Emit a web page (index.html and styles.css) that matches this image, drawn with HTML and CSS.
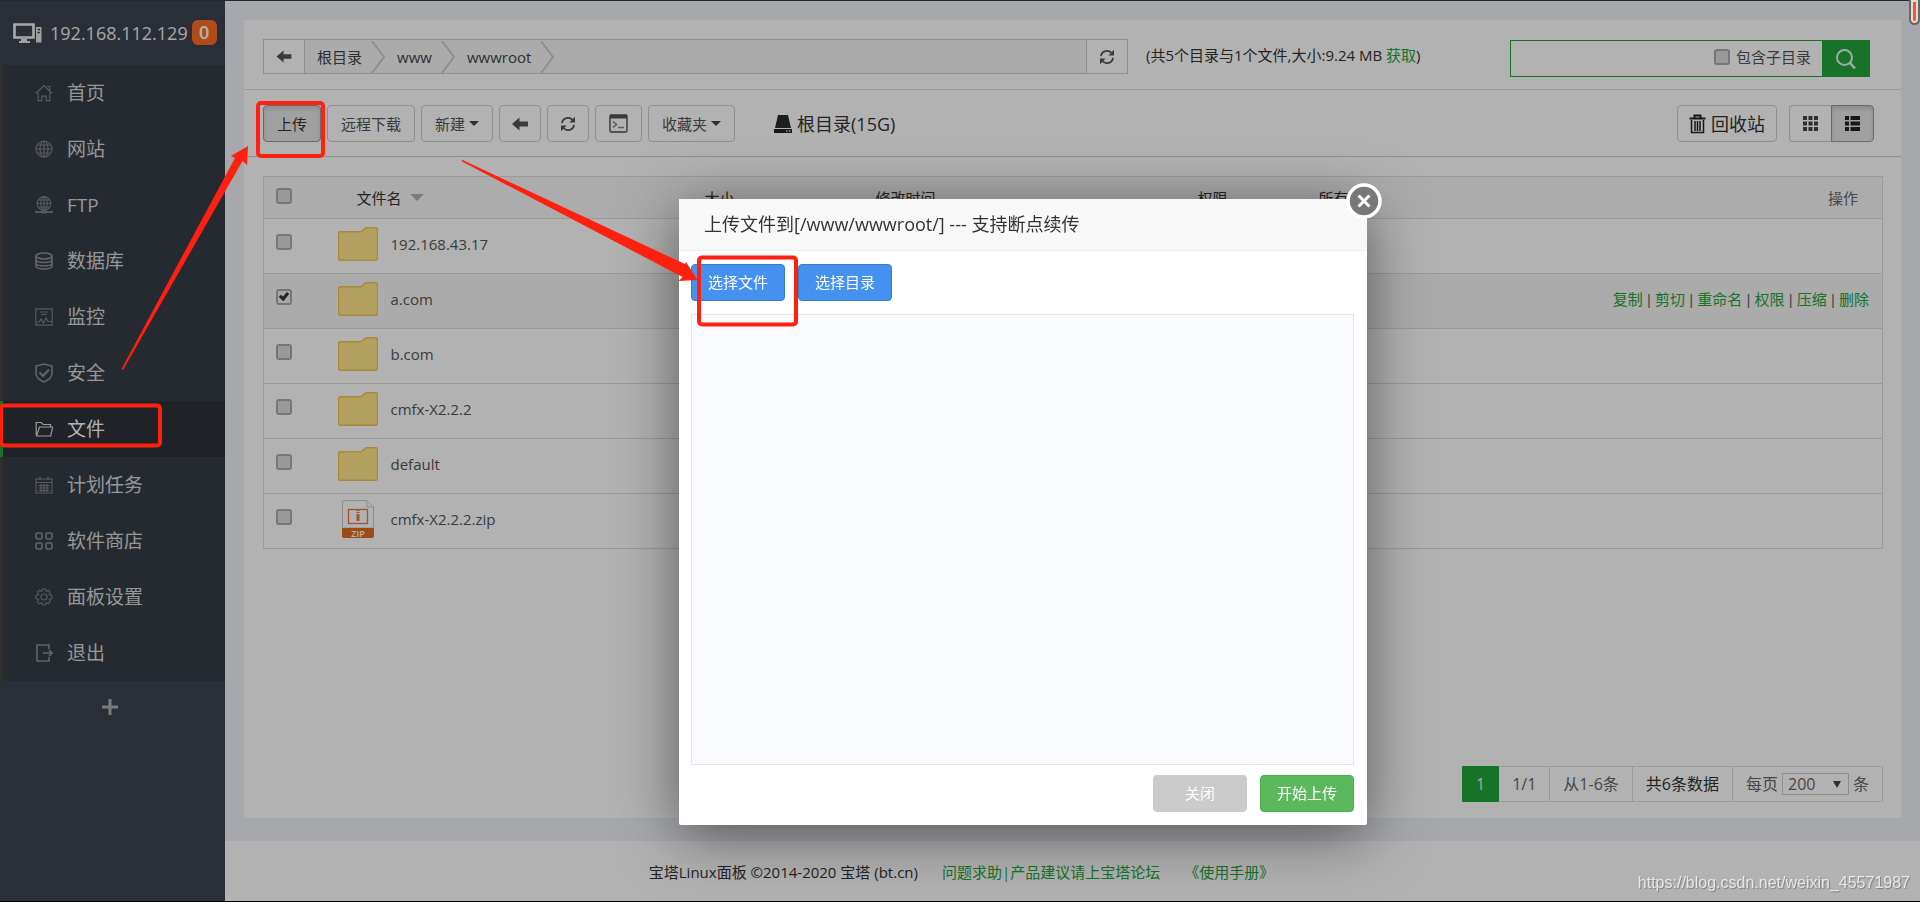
FILE: index.html
```html
<!DOCTYPE html>
<html lang="zh-CN">
<head>
<meta charset="utf-8">
<title>宝塔Linux面板</title>
<link rel="stylesheet" href="styles.css">
</head>
<body>
<svg class="defs" aria-hidden="true">
  <symbol id="i-refresh" viewBox="0 0 16 16"><path d="M2 7.2A6.1 6.1 0 0 1 12.6 4M14 8.8A6.1 6.1 0 0 1 3.4 12" fill="none" stroke="currentColor" stroke-width="1.800"/><path d="M15 .8v5.700H9.400zM1 15.200V9.500h5.600z" fill="currentColor"/></symbol>
  <symbol id="i-left" viewBox="0 0 16 14"><path d="M0 7l7.500-6.500v4H16v5H7.500v4z" fill="currentColor"/></symbol>
  <symbol id="i-folder" viewBox="0 0 40 34"><path d="M2.500 4.700h20.500l5-4h9.500a2 2 0 0 1 2 2v28.600a2 2 0 0 1-2 2h-35a2 2 0 0 1-2-2V6.700a2 2 0 0 1 2-2z" fill="#ffe68a" stroke="#f2c352" stroke-width="1.400"/></symbol>
  <symbol id="i-chev" viewBox="0 0 14 32"><path d="M1 0l12 16L1 32" fill="none" stroke="#ccccd2" stroke-width="1.800"/></symbol>
</svg>
<div class="app">
  <aside class="sidebar">
    <h1 class="host">
      <svg width="29" height="20" viewBox="0 0 29 20"><path d="M1.500 1.500h19v13h-19z" fill="none" stroke="#f4f4f4" stroke-width="2.600"/><path d="M8 16h6v2h3v2H6v-2h2zM23 4h5.500v15.500H23z" fill="#e4e4e4"/><path d="M24.500 6.500h2.500M24.500 9.500h2.500" stroke="#3d434f" stroke-width="1.300"/></svg>
      <span class="ip">192.168.112.129</span><span class="count">0</span>
    </h1>
    <nav class="menu">
      <a href="#"><svg viewBox="0 0 18 18"><path d="M.8 9.500L9 1.500l8.200 8M3.200 8.500v8.200h3.600v-4.500h4.400v4.500h3.600V8.500M12 2.500h2.800v4"/></svg>首页</a>
      <a href="#"><svg viewBox="0 0 18 18"><circle cx="9" cy="9" r="8"/><ellipse cx="9" cy="9" rx="4" ry="8"/><path d="M9 1v16M1 9h16M2.300 5h13.400M2.300 13h13.400"/></svg>网站</a>
      <a href="#"><svg viewBox="0 0 18 18"><circle cx="9" cy="7.500" r="6.800"/><ellipse cx="9" cy="7.500" rx="3.200" ry="6.800"/><path d="M9 .7v15M2.200 7.500h13.600M3.200 4h11.600M3.200 11h11.600"/><path d="M0 16h18M6.500 16.500h5" stroke-width="2"/></svg>FTP</a>
      <a href="#"><svg viewBox="0 0 18 18" class="bright"><ellipse cx="9" cy="4" rx="8" ry="3"/><path d="M1 4v10c0 4 16 4 16 0V4M1 7.500c0 4 16 4 16 0M1 11c0 4 16 4 16 0"/></svg>数据库</a>
      <a href="#"><svg viewBox="0 0 18 18"><path d="M.8.8h16.400v16.400H.800zM5 4h8M6 6.500h6M.8 14H4l2-3 2.500 4 2.500-5 2 3.500h4"/></svg>监控</a>
      <a href="#"><svg viewBox="0 0 18 20" class="bright"><path d="M9 1L17 3v7.500c0 4-3.500 6.500-8 8.500-4.500-2-8-4.500-8-8.500V3z"/><path d="M4.500 9.500L8 13l6-6.500" stroke-width="2"/></svg>安全</a>
      <a href="#" class="active"><svg viewBox="0 0 18 18"><path d="M1.200 15V2.500h5l2 2h7.300V7M1.500 16L4.500 7h13.200l-2 9z"/></svg>文件</a>
      <a href="#"><svg viewBox="0 0 18 18"><path d="M1 3h16v14H1zM1 6.500h16M5 .5v3.500M13 .5v3.500M3.500 9.500h11M3.500 12h11M3.500 14.500h11M6 8v8M9 8v8M12 8v8"/></svg>计划任务</a>
      <a href="#"><svg viewBox="0 0 18 18" class="bright"><rect x="1" y="1" width="6" height="6" rx="1.500"/><rect x="11" y="1" width="6" height="6" rx="1.500"/><rect x="1" y="11" width="6" height="6" rx="1.500"/><rect x="11" y="11" width="6" height="6" rx="1.500"/></svg>软件商店</a>
      <a href="#"><svg viewBox="0 0 18 18"><circle cx="9" cy="9" r="3"/><path d="M7.500 1h3l.6 2.200 2.100-1 2 2-1 2.100 2.800 1.200v3l-2.800.8 1 2.500-2 2-2.100-1.200-.6 2.400h-3l-.8-2.400-2.300 1.200-2-2 1.200-2.400L1 10.500v-3l2.600-1-1.200-2.300 2-2 2.300 1.200z"/></svg>面板设置</a>
      <a href="#"><svg viewBox="0 0 18 18" class="bright"><path d="M14 5V1H2v16h12v-4M8 9h9M14 6l3 3-3 3"/></svg>退出</a>
    </nav>
    <button class="add" aria-label="添加"><svg width="18" height="18" viewBox="0 0 18 18"><path d="M9 1v16M1 9h16" stroke="#b0b0b0" stroke-width="3"/></svg></button>
  </aside>

  <div class="page">
    <main class="panel">
      <section class="pathbar">
        <div class="crumbs">
          <button class="sq" aria-label="后退"><svg width="16" height="13"><use href="#i-left"/></svg></button>
          <nav class="trail">
            <a href="#">根目录</a><svg width="14" height="32"><use href="#i-chev"/></svg>
            <a href="#">www</a><svg width="14" height="32"><use href="#i-chev"/></svg>
            <a href="#">wwwroot</a><svg width="14" height="32"><use href="#i-chev"/></svg>
          </nav>
          <button class="sq last" aria-label="刷新"><svg width="16" height="16"><use href="#i-refresh"/></svg></button>
        </div>
        <p class="summary">(共5个目录与1个文件,大小:9.24 MB <a href="#">获取</a>)</p>
        <form class="search">
          <input type="text" class="query" aria-label="搜索">
          <label><input type="checkbox" class="tick">包含子目录</label>
          <button type="button" aria-label="搜索"><svg width="22" height="22" viewBox="0 0 22 22"><circle cx="9.500" cy="9.500" r="7.500" fill="none" stroke="#e8f5ea" stroke-width="2"/><path d="M15 15l5 5.500" stroke="#e8f5ea" stroke-width="2.500"/></svg></button>
        </form>
      </section>

      <section class="toolbar">
        <button class="btn pressed">上传</button>
        <button class="btn">远程下载</button>
        <button class="btn">新建<i class="caret"></i></button>
        <button class="btn icon" aria-label="后退"><svg width="16" height="14"><use href="#i-left"/></svg></button>
        <button class="btn icon" aria-label="刷新"><svg width="16" height="16"><use href="#i-refresh"/></svg></button>
        <button class="btn" aria-label="终端"><svg width="19" height="19" viewBox="0 0 19 19"><rect x="1" y="1" width="17" height="17" rx="1.500" fill="none" stroke="#777" stroke-width="1.800"/><path d="M1 1h17v3.500H1z" fill="#555"/><path d="M4 7.500l3.500 3L4 13.500M9 13.500h6" fill="none" stroke="#888" stroke-width="1.600"/></svg></button>
        <button class="btn">收藏夹<i class="caret"></i></button>
        <span class="disk"><svg width="18" height="18" viewBox="0 0 18 18"><path d="M4 0h10l3 13H1z" fill="#2c2c2c"/><path d="M0 14h18v4H0z" fill="#222"/><path d="M12 16h1.500M15 16h1.500" stroke="#ddd" stroke-width="1.500"/></svg>根目录(15G)</span>
        <button class="btn trash"><svg width="17" height="20" viewBox="0 0 17 20"><path d="M.5 4.500h16M5.500 4V1.500h6V4" fill="none" stroke="#222" stroke-width="2"/><path d="M2.500 6v12.500h12V6M6 7v10M8.500 7v10M11 7v10" fill="none" stroke="#222" stroke-width="1.500"/></svg>回收站</button>
        <div class="views">
          <button class="btn" aria-label="图标"><svg width="15" height="15" viewBox="0 0 15 15"><path d="M0 0h4v4H0zM5.500 0h4v4h-4zM11 0h4v4h-4zM0 5.500h4v4H0zM5.500 5.500h4v4h-4zM11 5.500h4v4h-4zM0 11h4v4H0zM5.500 11h4v4h-4zM11 11h4v4h-4z" fill="#444"/></svg></button>
          <button class="btn pressed" aria-label="列表"><svg width="15" height="15" viewBox="0 0 15 15"><path d="M0 0h4v4H0zM5.500 0H15v4H5.500zM0 5.500h4v4H0zM5.500 5.500H15v4H5.500zM0 11h4v4H0zM5.500 11H15v4H5.500z" fill="#222"/></svg></button>
        </div>
      </section>

      <table class="files">
        <colgroup><col class="c-tick"><col class="c-name"><col class="c-size"><col class="c-time"><col class="c-perm"><col class="c-own"><col></colgroup>
        <thead><tr><th><input type="checkbox" class="tick" aria-label="全选"></th><th class="h-name">文件名<i class="sort"></i></th><th>大小</th><th>修改时间</th><th>权限</th><th>所有者</th><th class="h-op">操作</th></tr></thead>
        <tbody>
          <tr><td><input type="checkbox" class="tick" aria-label="192.168.43.17"></td><td><a href="#" class="file"><svg width="40" height="34"><use href="#i-folder"/></svg>192.168.43.17</a></td><td></td><td></td><td></td><td></td><td></td></tr>
          <tr class="sel"><td><input type="checkbox" class="tick" aria-label="a.com" checked></td><td><a href="#" class="file"><svg width="40" height="34"><use href="#i-folder"/></svg>a.com</a></td><td></td><td></td><td></td><td></td><td class="ops"><a href="#">复制</a> | <a href="#">剪切</a> | <a href="#">重命名</a> | <a href="#">权限</a> | <a href="#">压缩</a> | <a href="#">删除</a></td></tr>
          <tr><td><input type="checkbox" class="tick" aria-label="b.com"></td><td><a href="#" class="file"><svg width="40" height="34"><use href="#i-folder"/></svg>b.com</a></td><td></td><td></td><td></td><td></td><td></td></tr>
          <tr><td><input type="checkbox" class="tick" aria-label="cmfx-X2.2.2"></td><td><a href="#" class="file"><svg width="40" height="34"><use href="#i-folder"/></svg>cmfx-X2.2.2</a></td><td></td><td></td><td></td><td></td><td></td></tr>
          <tr><td><input type="checkbox" class="tick" aria-label="default"></td><td><a href="#" class="file"><svg width="40" height="34"><use href="#i-folder"/></svg>default</a></td><td></td><td></td><td></td><td></td><td></td></tr>
          <tr><td><input type="checkbox" class="tick" aria-label="cmfx-X2.2.2.zip"></td><td><a href="#" class="file"><svg width="40" height="38" viewBox="0 0 40 38"><path d="M4.500 28V2a1.500 1.500 0 0 1 1.500-1.500h23l6.500 6.500v21z" fill="#fff" stroke="#ccc"/><path d="M29 .5V7h6.500" fill="none" stroke="#ccc"/><rect x="10.500" y="9.500" width="19" height="14" fill="none" stroke="#e5783c" stroke-width="1.300"/><path d="M20 10v5" stroke="#e5783c" stroke-width="3" stroke-dasharray="1 1"/><path d="M18.500 15h3v6h-3z" fill="#e5783c"/><path d="M4 28h32v8a2 2 0 0 1-2 2H6a2 2 0 0 1-2-2z" fill="#e06a20"/><text x="20" y="36.500" class="zip" text-anchor="middle">ZIP</text></svg>cmfx-X2.2.2.zip</a></td><td></td><td></td><td></td><td></td><td></td></tr>
        </tbody>
      </table>

      <div class="pager">
        <span class="cur">1</span><span>1/1</span><span>从1-6条</span><span class="total">共6条数据</span>
        <label>每页<b class="pick"><select><option>200</option></select></b>条</label>
      </div>
    </main>
    <footer class="foot"><span>宝塔Linux面板 ©2014-2020 宝塔 (bt.cn)</span><a href="#">问题求助|产品建议请上宝塔论坛</a><a href="#">《使用手册》</a></footer>
  </div>
</div>

<div class="shade"></div>

<section class="dialog" role="dialog" aria-label="上传文件">
  <h2>上传文件到[/www/wwwroot/] --- 支持断点续传</h2>
  <button class="close" aria-label="关闭窗口"><svg width="36" height="36" viewBox="0 0 36 36"><circle cx="18" cy="18" r="16" fill="#787878" stroke="#fff" stroke-width="3.500"/><path d="M12.500 12.500l11 11M23.500 12.500l-11 11" stroke="#fff" stroke-width="3"/></svg></button>
  <div class="body">
    <div class="picks"><button class="act blue">选择文件</button><button class="act blue">选择目录</button></div>
    <div class="drop"></div>
    <div class="ends"><button class="act grey">关闭</button><button class="act green">开始上传</button></div>
  </div>
</section>

<svg class="marks" width="1920" height="902" viewBox="0 0 1920 902" aria-hidden="true">
  <g fill="none" stroke="#ff2010" stroke-width="4">
    <rect x="258" y="103" width="65" height="53" rx="3"/>
    <rect x="1" y="405.500" width="159" height="40" rx="3"/>
    <rect x="699" y="257.500" width="97" height="67" rx="3"/>
  </g>
  <g fill="#ff2010">
    <path d="M121.500 369L235 158l-4-2 17-10-1 19-4.500-4L123 370z"/>
    <path d="M461.500 159.500L687 265l-2-1 1-2 11.500 18-19 1 4-4L462 161.500z"/>
  </g>
</svg>
<i class="scroll"></i>
<div class="watermark">https://blog.csdn.net/weixin_45571987</div>
</body>
</html>
```
FILE: styles.css
```css
* { box-sizing: border-box; }
body { margin: 0; font: 15px/20px "Open Sans", "Noto Sans CJK SC", sans-serif; color: #333; background: #f0f1f6; border-top: 1px solid #3a3842; border-bottom: 1px solid #000; }
a { color: #20a53a; text-decoration: none; }
button, input, select { font: inherit; color: inherit; }
button { cursor: pointer; }
.defs { display: none; }

.app { display: flex; min-height: calc(100vh - 2px); }
.sidebar { flex: 0 0 225px; background: #3d434f; }
.host { display: flex; align-items: center; height: 64px; margin: 0; padding: 0 0 1px 13px; font-size: 18px; font-weight: 400; color: #fff; }
.ip { margin-left: 8px; color: #eee; }
.count { margin-left: 4px; width: 25px; border-radius: 6px; background: #fc6d26; font-weight: 600; line-height: 25px; text-align: center; }
.menu { background: #363d47; }
.menu a { display: flex; align-items: center; gap: 14px; height: 56px; padding-left: 32px; border-left: 3px solid #42433f; font-size: 19px; color: #d8d8d8; }
.menu svg { width: 18px; height: 20px; fill: none; stroke: #7c8086; stroke-width: 1.2; }
.menu svg.bright { stroke: #8d9094; stroke-width: 1.6; }
.menu a.active { background: #2d3238; border-left-color: #20a53a; color: #fff; }
.menu a.active svg { stroke: #ddd; }
.add { display: flex; margin: 17px 0 0 101px; padding: 0; border: 0; background: none; }

.page { flex: 1; min-width: 0; display: flex; flex-direction: column; }
.panel { flex: 1; display: flex; flex-direction: column; margin: 19px 19px 23px; background: #fff; }
.pathbar { display: flex; align-items: flex-start; padding: 19px 31px 12px 19px; border-bottom: 1px solid #ddd; }
.crumbs { flex: 0 1 865px; display: flex; height: 35px; border: 1px solid #ccc; }
.sq { display: flex; align-items: center; justify-content: center; width: 41px; padding: 0; border: 0; border-right: 1px solid #ccc; background: #fff; color: #555; }
.sq.last { border-right: 0; border-left: 1px solid #ccc; }
.trail { flex: 1; display: flex; align-items: center; background: #f5f5f5; }
.trail a { padding: 0 9px 0 12px; color: #444; }
.summary { margin: 6px 0 0 18px; }
.search { display: flex; align-items: stretch; width: 360px; height: 37px; margin: 1px 0 0 auto; border: 1px solid #20a53a; }
.query { flex: 1; min-width: 0; border: 0; background: none; outline: 0; }
.search label { display: flex; align-items: center; gap: 6px; padding: 0 11px 3px 0; color: #555; }
.search button { display: flex; align-items: center; justify-content: center; width: 47px; border: 0; background: #20a53a; }
.tick { appearance: none; display: block; width: 16px; height: 16px; margin: 0; border: 2px solid #aaa; border-radius: 3px; background: #dcdcdc; }
.tick:checked { background: #eee; }
.tick:checked::after { content: ""; display: block; width: 3px; height: 6px; margin-left: 3px; border: solid #333; border-width: 0 3px 3px 0; transform: rotate(40deg); }

.toolbar { display: flex; align-items: center; gap: 6px; padding: 15px 27px 14px 19px; border-bottom: 1px solid #ccc; }
.btn { display: flex; align-items: center; justify-content: center; height: 37px; padding: 0 13px; border: 1px solid #ccc; border-radius: 4px; background: #fff; color: #555; }
.btn svg { flex: none; }
.icon { padding: 0 12px; }
.pressed { background: #e6e6e6; border-color: #999; color: #333; box-shadow: inset 0 3px 5px rgba(0,0,0,.13); }
.caret { margin-left: 4px; border: 5px solid transparent; border-top-color: #444; border-bottom: 0; }
.disk { display: flex; align-items: center; gap: 5px; margin-left: 33px; font-size: 18px; }
.trash { margin-left: auto; gap: 5px; font-size: 18px; color: #333; padding: 0 11px; }
.views { display: flex; margin-left: 6px; }
.views .btn:first-child { border-right: 0; border-radius: 4px 0 0 4px; }
.views .btn:last-child { border-radius: 0 4px 4px 0; }

.files { width: calc(100% - 37px); margin: 19px 18px 0 19px; table-layout: fixed; border-collapse: collapse; border: 1px solid #ddd; }
.c-tick { width: 62px; }
.c-name { width: 367px; }
.c-size { width: 171px; }
.c-time { width: 322px; }
.c-perm { width: 121px; }
.c-own { width: 120px; }
.files th { height: 42px; padding: 0 12px; background: #f6f6f6; font-weight: 400; text-align: left; }
.files .h-name { padding-left: 31px; }
.files .h-op { padding-right: 24px; text-align: right; color: #666; }
.sort { display: inline-block; margin-left: 8px; border: 7px solid transparent; border-top-color: #b0b0b0; border-bottom: 0; vertical-align: 3px; }
.files td { height: 55px; padding: 0 12px 4px; border-top: 1px solid #ddd; }
.files .tick { position: relative; top: -2px; }
.file { display: flex; align-items: center; gap: 13px; color: #555; }
.sel td { background: #f5f5f5; }
.files .ops { padding: 0 13px 2px 0; font-family: "Liberation Sans", "Noto Sans CJK SC", sans-serif; text-align: right; white-space: nowrap; color: #666; }
.zip { font: 600 9px "Open Sans", sans-serif; fill: #fff; }

.pager { display: flex; margin: auto 18px 16px auto; border: 1px solid #ddd; font-size: 16px; line-height: 34px; color: #666; }
.pager span { padding: 0 13px; border-right: 1px solid #ddd; }
.pager .cur { margin: -1px 0 -1px -1px; padding: 1px 14px; border-right: 0; background: #20a53a; color: #eee; }
.pager .total { color: #333; }
.pager label { display: flex; align-items: center; gap: 4px; padding: 0 13px; }
.pick { position: relative; display: flex; font-weight: 400; }
.pick::after { content: ""; position: absolute; right: 8px; top: 8px; border: 4px solid transparent; border-top: 7px solid #444; border-bottom: 0; pointer-events: none; }
.pager select { appearance: none; width: 67px; height: 22px; padding: 0 5px; border: 1px solid #ccc; border-radius: 0; background: #fff; line-height: 20px; }

.foot { display: flex; align-items: center; justify-content: center; gap: 24px; height: 60px; padding: 2px 222px 0 0; background: #fff; }

.shade { position: fixed; inset: 0 0 1px; background: rgba(0,0,0,.3); }
.dialog { position: absolute; left: 679px; top: 199px; width: 688px; border-radius: 2px; background: #fff; box-shadow: 0 10px 60px rgba(0,0,0,.5); }
.dialog h2 { margin: 0; padding: 0 25px; border-bottom: 1px solid #eee; background: #f8f8f8; font-size: 18px; font-weight: 400; line-height: 51px; }
.close { position: absolute; top: -16px; right: -15px; display: flex; padding: 0; border: 0; background: none; }
.body { padding: 13px 13px 13px 12px; }
.picks, .ends { display: flex; gap: 13px; }
.act { width: 94px; height: 37px; padding: 0 0 1px; border: 1px solid; border-radius: 4px; color: #fff; }
.blue { background: #4491f0; border-color: #3580bd; }
.grey { background: #cbcbcb; border-color: #cbcbcb; }
.green { background: #5cb85c; border-color: #4cae4c; }
.drop { height: 451px; margin: 13px 0 10px; border: 1px solid #e2e4e9; background: #fafbff; }
.ends { justify-content: flex-end; }

.marks { position: absolute; left: 0; top: 0; pointer-events: none; }
.scroll { position: absolute; top: 0; right: 0; width: 11px; height: 25px; border: solid #666; border-width: 0 2px 2px; border-radius: 0 0 6px 6px; background: #f55a24; box-shadow: inset 0 0 0 2px #ddd; }
.watermark { position: absolute; right: 10px; bottom: 9px; font: 16px/20px "Liberation Sans", sans-serif; color: rgba(255,255,255,.75); text-shadow: 1px 1px 1px rgba(0,0,0,.3); }
```
